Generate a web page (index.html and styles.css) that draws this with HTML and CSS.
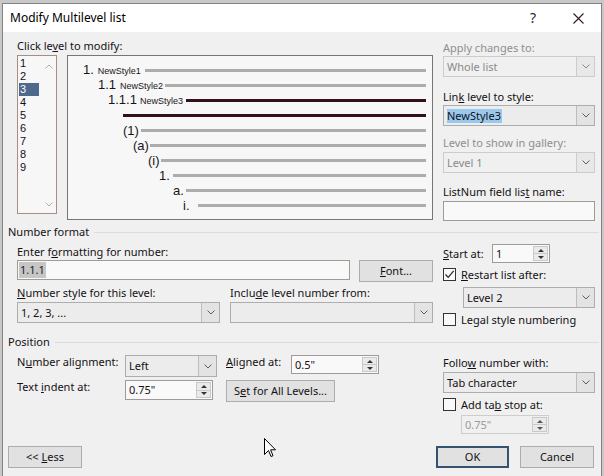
FILE: index.html
```html
<!DOCTYPE html>
<html>
<head>
<meta charset="utf-8">
<title>Modify Multilevel list</title>
<link rel="stylesheet" href="styles.css">
</head>
<body>
<div class="dialog">
  <div class="titlebar">
    <span class="title">Modify Multilevel list</span>
    <span class="help">?</span>
    <span class="close"><svg width="11" height="11" viewBox="0 0 11 11"><path d="M0.5 0.5 L10.5 10.5 M10.5 0.5 L0.5 10.5" stroke="#2a1a2a" stroke-width="1.1" fill="none"/></svg></span>
  </div>

  <div class="top">
    <div class="top-left">
      <div class="lbl first">Click le<u>v</u>el to modify:</div>
      <div class="top-row">
        <div class="levels">
          <ul class="lv-items">
            <li>1</li><li>2</li><li class="sel">3</li><li>4</li><li>5</li><li>6</li><li>7</li><li>8</li><li>9</li>
          </ul>
          <div class="lv-scroll">
            <svg width="8" height="5" viewBox="0 0 8 5"><path d="M0.5 4.5 L4 1 L7.5 4.5" stroke="#b0b0b0" fill="none"/></svg>
            <svg width="8" height="5" viewBox="0 0 8 5"><path d="M0.5 0.5 L4 4 L7.5 0.5" stroke="#b0b0b0" fill="none"/></svg>
          </div>
        </div>
        <div class="preview">
          <div class="row p1"><span class="num">1.<span class="sty">NewStyle1</span></span><i class="ln"></i></div>
          <div class="row p2"><span class="num">1.1<span class="sty">NewStyle2</span></span><i class="ln"></i></div>
          <div class="row p3"><span class="num">1.1.1<span class="sty">NewStyle3</span></span><i class="ln dark"></i></div>
          <div class="row p4"><i class="ln dark"></i></div>
          <div class="row p5"><span class="num">(1)</span><i class="ln"></i></div>
          <div class="row p6"><span class="num">(a)</span><i class="ln"></i></div>
          <div class="row p7"><span class="num">(i)</span><i class="ln"></i></div>
          <div class="row p8"><span class="num">1.</span><i class="ln"></i></div>
          <div class="row p9"><span class="num">a.</span><i class="ln"></i></div>
          <div class="row p10"><span class="num">i.</span><i class="ln"></i></div>
        </div>
      </div>
    </div>

    <div class="top-right">
      <div class="lbl dis r1">Apply changes to:</div>
      <div class="combo disabled"><span class="val">Whole list</span><span class="btn"><svg width="8" height="5" viewBox="0 0 8 5"><path d="M0.5 0.5 L4 4 L7.5 0.5" stroke="#8a8a8a" fill="none"/></svg></span></div>
      <div class="lbl r2">Lin<u>k</u> level to style:</div>
      <div class="combo"><span class="val"><span class="hl">NewStyle3</span></span><span class="btn"><svg width="8" height="5" viewBox="0 0 8 5"><path d="M0.5 0.5 L4 4 L7.5 0.5" stroke="#5a5a6a" fill="none"/></svg></span></div>
      <div class="lbl dis r3">Level to show in gallery:</div>
      <div class="combo disabled mid"><span class="val">Level 1</span><span class="btn"><svg width="8" height="5" viewBox="0 0 8 5"><path d="M0.5 0.5 L4 4 L7.5 0.5" stroke="#5a5a6a" fill="none"/></svg></span></div>
      <div class="lbl r4">ListNum field lis<u>t</u> name:</div>
      <div class="input"></div>
    </div>
  </div>

  <div class="group g1"><span>Number format</span></div>
  <div class="nf">
    <div class="nf-left">
      <div class="lbl n1">Enter f<u>o</u>rmatting for number:</div>
      <div class="nf-row">
        <div class="input fmt"><span class="field">1.1.1</span></div>
        <div class="button font"><u>F</u>ont...</div>
      </div>
      <div class="nf-grid">
        <div class="lbl"><u>N</u>umber style for this level:</div>
        <div class="lbl">Inclu<u>d</u>e level number from:</div>
        <div class="combo"><span class="val">1, 2, 3, ...</span><span class="btn"><svg width="8" height="5" viewBox="0 0 8 5"><path d="M0.5 0.5 L4 4 L7.5 0.5" stroke="#5a5a6a" fill="none"/></svg></span></div>
        <div class="combo"><span class="val"></span><span class="btn"><svg width="8" height="5" viewBox="0 0 8 5"><path d="M0.5 0.5 L4 4 L7.5 0.5" stroke="#5a5a6a" fill="none"/></svg></span></div>
      </div>
    </div>
    <div class="nf-right">
      <div class="start-row">
        <span class="lbl start-lbl"><u>S</u>tart at:</span>
        <div class="spin start"><span class="val">1</span><span class="arrows"><i class="up"></i><i class="dn"></i></span></div>
      </div>
      <div class="check-row c1">
        <span class="box"><svg width="11" height="11" viewBox="0 0 11 11"><path d="M1.5 5.5 L4.2 8.3 L9.7 1.8" stroke="#222" stroke-width="1.2" fill="none"/></svg></span>
        <span class="clbl"><u>R</u>estart list after:</span>
      </div>
      <div class="combo lvl2"><span class="val">Level 2</span><span class="btn"><svg width="8" height="5" viewBox="0 0 8 5"><path d="M0.5 0.5 L4 4 L7.5 0.5" stroke="#5a5a6a" fill="none"/></svg></span></div>
      <div class="check-row c2">
        <span class="box"></span>
        <span class="clbl">Le<u>g</u>al style numbering</span>
      </div>
    </div>
  </div>

  <div class="group g2"><span>Position</span></div>
  <div class="pos">
    <div class="pos-left">
      <div class="pos-row">
        <span class="lbl plbl">N<u>u</u>mber alignment:</span>
        <div class="combo align"><span class="val">Left</span><span class="btn"><svg width="8" height="5" viewBox="0 0 8 5"><path d="M0.5 0.5 L4 4 L7.5 0.5" stroke="#5a5a6a" fill="none"/></svg></span></div>
        <span class="lbl albl"><u>A</u>ligned at:</span>
        <div class="spin aligned"><span class="val">0.5"</span><span class="arrows"><i class="up"></i><i class="dn"></i></span></div>
      </div>
      <div class="pos-row r2row">
        <span class="lbl plbl">Text <u>i</u>ndent at:</span>
        <div class="spin indent"><span class="val">0.75"</span><span class="arrows"><i class="up"></i><i class="dn"></i></span></div>
        <div class="button setall">S<u>e</u>t for All Levels...</div>
      </div>
    </div>
    <div class="pos-right">
      <div class="lbl f1">Follo<u>w</u> number with:</div>
      <div class="combo tab"><span class="val">Tab character</span><span class="btn"><svg width="8" height="5" viewBox="0 0 8 5"><path d="M0.5 0.5 L4 4 L7.5 0.5" stroke="#5a5a6a" fill="none"/></svg></span></div>
      <div class="check-row c3">
        <span class="box"></span>
        <span class="clbl">Add ta<u>b</u> stop at:</span>
      </div>
      <div class="spin tabstop disabled"><span class="val">0.75"</span><span class="arrows"><i class="up"></i><i class="dn"></i></span></div>
    </div>
  </div>

  <div class="buttons">
    <div class="button less">&lt;&lt; <u>L</u>ess</div>
    <div class="button ok">OK</div>
    <div class="button cancel">Cancel</div>
  </div>
</div>
<svg class="cursor" width="12" height="20" viewBox="0 0 12 20"><path d="M0.5 0.5 L0.5 16.5 L4.5 12.5 L7 18.5 L9 17.7 L6.6 11.8 L11.5 11.8 Z" fill="#fff" stroke="#000" stroke-width="1"/></svg>
</body>
</html>
```
FILE: styles.css
```css
* { box-sizing: border-box; }
body {
  margin: 0;
  width: 604px;
  height: 476px;
  overflow: hidden;
  background: #c8c8c8;
  font: 11px/16px "Noto Sans", sans-serif;
  color: #141014;
  position: relative;
}
u { text-decoration: underline; text-underline-offset: 1px; }
.dialog {
  margin: 3px 0 0 2px;
  width: 600px;
  height: 480px;
  border: 1px solid #838383;
  background: #f0f0f0;
}
.titlebar {
  height: 28px;
  background: #ffffff;
  display: flex;
  align-items: center;
  padding-left: 7px;
}
.title { font-size: 12px; flex: 1; color: #000; }
.help { font-size: 14px; width: 8px; margin-right: 32px; margin-left: -3px; color: #2a1a2a; }
.close { width: 11px; height: 11px; margin-left: 3px; margin-right: 17px; display: flex; }

.lbl { display: block; line-height: 16px; white-space: nowrap; }
.dis { color: #8e8e8e; }

/* top */
.top { display: flex; height: 188px; padding-left: 14px; }
.top-left { width: 416px; }
.lbl.first { margin-top: 6px; }
.top-row { display: flex; gap: 10px; margin-top: 1px; align-items: flex-start; }
.levels {
  width: 40px; height: 159px;
  border: 1px solid #a38f86;
  background: #f7f7f7;
  display: flex;
}
.lv-items { list-style: none; margin: 0; padding: 1px 0 0 1px; width: 23px; font-family: "Liberation Sans", Arial, sans-serif; font-size: 11px; }
.lv-items li { line-height: 13px; height: 13px; padding-left: 1px; width: 20px; }
.lv-items li.sel { background: #4d6a8c; color: #fff; }
.lv-scroll {
  width: 15px; margin-left: 0;
  display: flex; flex-direction: column; justify-content: space-between; align-items: center;
  padding: 8px 0 6px;
}
.preview {
  width: 366px; height: 165px;
  border: 1px solid #767676;
  background: #f7f7f7;
  padding: 7px 6px 0 0;
}
.row { display: flex; align-items: center; height: 15px; }
.num { font-family: "Liberation Sans", Arial, sans-serif; font-size: 13px; line-height: 15px; white-space: nowrap; color: #1a1418; flex: none; }
.sty { font-size: 9px; margin-left: 4px; }
.p3 .sty { margin-left: 3px; }
.ln { flex: 1; height: 3px; background: #acacac; }
.ln.dark { background: #33101f; }
.p1 { padding-left: 15px; } .p1 .num { width: 62px; }
.p2 { padding-left: 30px; } .p2 .num { width: 67px; }
.p3 { padding-left: 40px; } .p3 .num { width: 78px; }
.p4 { padding-left: 55px; }
.p5 { padding-left: 55px; } .p5 .num { width: 18px; }
.p6 { padding-left: 65px; } .p6 .num { width: 17px; }
.p7 { padding-left: 80px; } .p7 .num { width: 13px; }
.p8 { padding-left: 91px; } .p8 .num { width: 14px; }
.p9 { padding-left: 105px; } .p9 .num { width: 13px; }
.p10 { padding-left: 115px; } .p10 .num { width: 15px; }

.top-right { width: 152px; margin-left: 10px; }
.r1 { margin-top: 8px; }
.r2 { margin-top: 12px; }
.r3 { margin-top: 9px; }
.r4 { margin-top: 11px; }
.top-right .combo { margin-top: 0; }
.top-right .combo.mid { margin-top: 1px; }
.top-right .input { margin-top: 1px; height: 20px; }

/* controls */
.combo {
  display: flex;
  height: 21px;
  border: 1px solid #adadad;
  background: #ececec;
}
.combo .val { flex: 1; padding-left: 3px; line-height: 19px; white-space: nowrap; overflow: hidden; }
.combo .btn {
  width: 18px;
  border-left: 1px solid #bdbdbd;
  background: #e3e3e3;
  display: flex; align-items: center; justify-content: center;
}
.combo.disabled { border-color: #cccccc; color: #8a8a8a; background: #f0f0f0; }
.combo.disabled .btn { border-left-color: #cccccc; background: #e8e8e8; }
.hl { background: #99c9ef; padding: 0 1px 0 0; display: inline-block; line-height: 14px; }
.input { border: 1px solid #a39a94; background: #f9f9f9; height: 20px; }

.button {
  border: 1px solid #adadad;
  background: #e1e1e1;
  height: 22px;
  line-height: 20px;
  text-align: center;
  white-space: nowrap;
}
.spin { display: flex; border: 1px solid #a39a94; background: #f9f9f9; height: 19px; }
.spin .val { flex: 1; padding-left: 3px; line-height: 17px; }
.spin .arrows {
  width: 15px; margin: 1px; border: 1px solid #c9c9c9; background: #eaeaea;
  display: flex; flex-direction: column;
}
.spin .arrows i { flex: 1; display: flex; align-items: center; justify-content: center; }
.spin .arrows i + i { border-top: 1px solid #c9c9c9; }
.spin .arrows i::after { content: ""; width: 0; height: 0; border-left: 3px solid transparent; border-right: 3px solid transparent; }
.spin .arrows .up::after { border-bottom: 3px solid #333; }
.spin .arrows .dn::after { border-top: 3px solid #333; }
.spin.disabled { border-color: #cdcdcd; color: #9a9a9a; background: #f0f0f0; }
.spin.disabled .arrows i::after { border-bottom-color: #555; border-top-color: #555; }

.check-row { display: flex; align-items: center; height: 13px; }
.box {
  width: 13px; height: 13px; border: 1px solid #333; background: #f9f9f9;
  display: flex; align-items: center; justify-content: center; flex: none;
}
.clbl { margin-left: 5px; line-height: 13px; white-space: nowrap; }

/* group headers */
.group { display: flex; align-items: center; padding: 0 2px 0 5px; height: 16px; }
.group::after { content: ""; flex: 1; height: 1px; background: #dcdcdc; margin-left: 5px; }
.g1 { margin-top: 4px; }
.g2 { margin-top: 8px; }

/* number format */
.nf { display: flex; padding-left: 14px; }
.nf-left { width: 416px; }
.n1 { margin-top: 4px; }
.nf-row { display: flex; align-items: flex-start; }
.input.fmt { width: 333px; height: 20px; padding: 1px 0 0 1px; }
.field { display: inline-block; background: #c6c6c6; line-height: 16px; padding: 0 1px; color: #222; }
.button.font { width: 74px; margin-left: 9px; }
.nf-grid { display: grid; grid-template-columns: 203px 203px; column-gap: 10px; margin-top: 3px; }
.nf-grid .combo { margin-top: 1px; }

.nf-right { width: 152px; margin-left: 10px; }
.start-row { display: flex; align-items: center; margin-top: 4px; height: 19px; }
.start-lbl { width: 49px; }
.spin.start { width: 58px; }
.c1 { margin-top: 5px; }
.combo.lvl2 { margin: 6px 0 0 20px; width: 132px; }
.c2 { margin-top: 5px; }

/* position */
.pos { display: flex; padding-left: 14px; }
.pos-left { width: 416px; }
.pos-row { display: flex; align-items: flex-start; margin-top: 5px; }
.pos-row.r2row { margin-top: 3px; }
.plbl { width: 108px; line-height: 14px; }
.combo.align { width: 92px; height: 22px; }
.combo.align .val { line-height: 20px; }
.albl { width: 65px; margin-left: 9px; line-height: 14px; }
.spin.aligned { width: 88px; }
.spin.indent { width: 88px; height: 20px; }
.spin.indent .val { line-height: 18px; }
.button.setall { width: 109px; margin-left: 13px; }

.pos-right { width: 152px; margin-left: 10px; }
.f1 { margin-top: 5px; }
.combo.tab { margin-top: 1px; }
.c3 { margin-top: 5px; }
.spin.tabstop { width: 88px; margin: 4px 0 0 18px; }

.buttons { display: flex; padding-left: 5px; margin-top: 12px; }
.button.less { width: 74px; }
.button.ok { width: 73px; margin-left: 354px; border: 2px solid #35526f; line-height: 18px; }
.button.cancel { width: 74px; margin-left: 11px; }

.cursor { position: absolute; left: 264px; top: 438px; }
```
